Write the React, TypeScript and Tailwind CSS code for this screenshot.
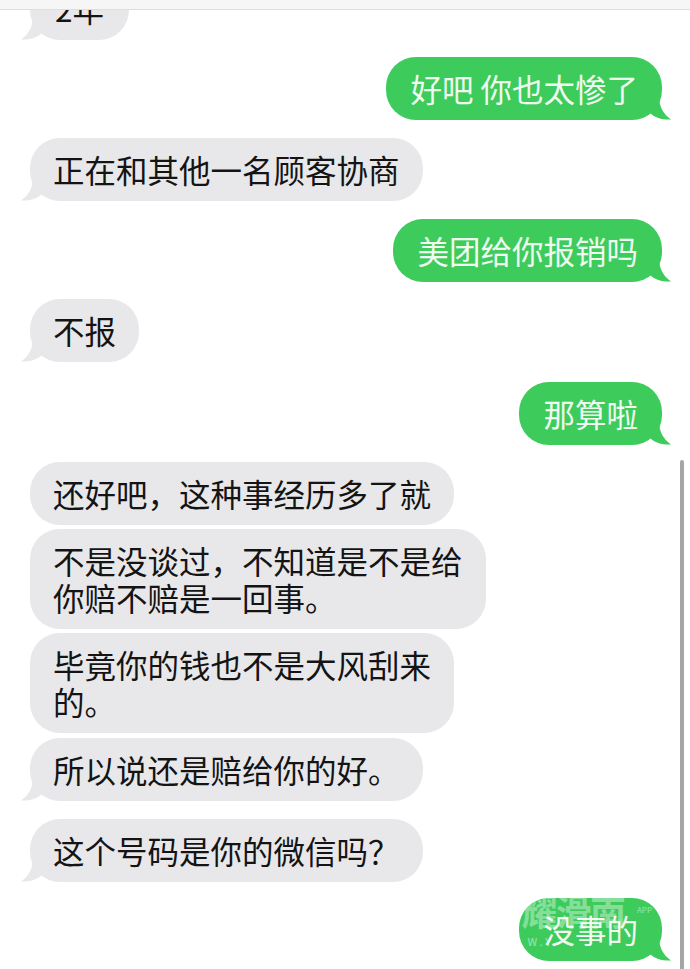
import type { ReactNode } from "react"

type Msg = {
  text: ReactNode
  me?: boolean
  tail?: boolean
  gap: string
  mark?: boolean
}

const messages: Msg[] = [
  { text: "好吧 你也太惨了", me: true, tail: true, gap: "mt-[17px]" },
  { text: "正在和其他一名顾客协商", tail: true, gap: "mt-[18px]" },
  { text: "美团给你报销吗", me: true, tail: true, gap: "mt-[18px]" },
  { text: "不报", tail: true, gap: "mt-[17px]" },
  { text: "那算啦", me: true, tail: true, gap: "mt-[20px]" },
  { text: "还好吧，这种事经历多了就", gap: "mt-[17px]" },
  { text: <>不是没谈过，不知道是不是给<br />你赔不赔是一回事。</>, gap: "mt-[4px]" },
  { text: <>毕竟你的钱也不是大风刮来<br />的。</>, gap: "mt-[4px]" },
  { text: "所以说还是赔给你的好。", tail: true, gap: "mt-[5px]" },
  { text: "这个号码是你的微信吗？", tail: true, gap: "mt-[18px]" },
  { text: "没事的", me: true, tail: true, gap: "mt-[16px]", mark: true },
]

function Tail({ me }: { me?: boolean }) {
  return (
    <svg
      viewBox="0 0 24 24"
      className={
        me
          ? "absolute bottom-0 right-[-10px] w-6 h-6 -scale-x-100"
          : "absolute bottom-0 left-[-10px] w-6 h-6"
      }
    >
      <path
        d="M13 0 C13 10 9 18 1 23.5 C9 24 17 22 22 17 L22 0 Z"
        fill={me ? "#3dcb5c" : "#e8e8ea"}
      />
    </svg>
  )
}

function Bubble({ msg }: { msg: Msg }) {
  return (
    <div className={`flex ${msg.me ? "justify-end pr-[28px]" : "justify-start pl-[30px]"} ${msg.gap}`}>
      <div
        className={
          msg.me
            ? "relative rounded-[30px] bg-[#3dcb5c] px-6 py-[13px] text-[31.5px] leading-[37px] text-[#effbef]"
            : "relative rounded-[30px] bg-[#e8e8ea] px-[23px] py-[13px] text-[31.5px] leading-[37px] text-[#141414]"
        }
      >
        {msg.tail && <Tail me={msg.me} />}
        <span className="relative">{msg.text}</span>
        {msg.mark && (
          <div className="absolute inset-0 overflow-hidden rounded-[30px] pointer-events-none">
            <div className="absolute left-[2px] top-[-6px] text-[36px] font-bold leading-none text-white/40 tracking-tighter">
              耀滑南
            </div>
            <div className="absolute left-[8px] top-[38px] text-[11px] leading-none text-white/50">
              W . Y
            </div>
            <div className="absolute right-[10px] top-[8px] text-[8px] leading-none text-white/50">
              APP
            </div>
          </div>
        )}
      </div>
    </div>
  )
}

export default function App() {
  return (
    <div
      className="relative h-[969px] w-full overflow-hidden bg-white"
      style={{ fontFamily: '"Noto Sans CJK SC", "Noto Sans", sans-serif' }}
    >
      <div className="relative z-10 h-[10px] border-b border-[#dedede] bg-[#f6f6f6]" />

      <div className="flex flex-col">
        <div className="flex justify-start pl-[30px] mt-[-33px]">
          <div className="relative rounded-[30px] bg-[#e8e8ea] px-[25px] py-[13px] text-[31.5px] leading-[37px] text-[#141414]">
            <Tail />
            <span className="relative">2年</span>
          </div>
        </div>

        {messages.map((m, i) => (
          <Bubble key={i} msg={m} />
        ))}
      </div>

      <div className="absolute right-[6px] top-[460px] bottom-0 w-[4px] rounded-t-full bg-[#a6a6a6]" />
    </div>
  )
}
